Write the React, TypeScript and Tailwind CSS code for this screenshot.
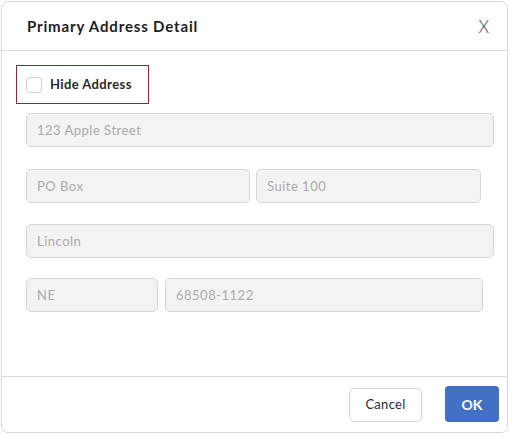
const fieldClass =
  "h-[34px] rounded-[5px] border border-[#d6d6d6] bg-[#f3f3f3] px-[10px] text-[13px] tracking-[0.5px] text-[#555] placeholder:text-[#ababab] outline-none";

const Field = ({ placeholder, width }: { placeholder: string; width: string }) => (
  <input disabled className={`${fieldClass} ${width}`} placeholder={placeholder} />
);

export default function App() {
  return (
    <div className="w-[510px] h-[435px] bg-white p-px font-['Lato',sans-serif]">
      <div className="w-[507px] h-[432px] rounded-[7px] border border-[#d9d9d9] bg-white flex flex-col">
        {/* Header */}
        <div className="h-[49px] border-b border-[#dcdcdc] flex items-center justify-between pl-[25px] pr-[18px] shrink-0">
          <h2 className="text-[15px] font-bold text-[#1e1e1e] tracking-[0.85px]">Primary Address Detail</h2>
          <button className="text-[17px] font-light text-[#3a3a3a] leading-none">X</button>
        </div>

        {/* Body */}
        <div className="flex-1 pl-[24px] pt-[14px]">
          <div className="-ml-[10px] w-[133px] h-[39px] border border-[#8a2a38] flex items-center pl-[9px] gap-[8px]">
            <span className="w-[16px] h-[16px] rounded-[4px] border border-[#cfcfcf] bg-white" />
            <span className="text-[13px] font-bold text-[#2a2a2a] tracking-[0.4px]">Hide Address</span>
          </div>

          <div className="mt-[9px] flex">
            <Field placeholder="123 Apple Street" width="w-[468px]" />
          </div>
          <div className="mt-[22px] flex gap-[6px]">
            <Field placeholder="PO Box" width="w-[224px]" />
            <Field placeholder="Suite 100" width="w-[225px]" />
          </div>
          <div className="mt-[21px] flex">
            <Field placeholder="Lincoln" width="w-[468px]" />
          </div>
          <div className="mt-[20px] flex gap-[7px]">
            <Field placeholder="NE" width="w-[132px]" />
            <Field placeholder="68508-1122" width="w-[318px]" />
          </div>
        </div>

        {/* Footer */}
        <div className="h-[56px] border-t border-[#dcdcdc] flex items-start justify-end gap-[23px] pr-[8px] pt-[9px] shrink-0">
          <button className="mt-[2px] w-[73px] h-[34px] rounded-[5px] border border-[#d4d4d4] bg-white text-[13px] text-[#2a2a2a] tracking-[0.3px]">
            Cancel
          </button>
          <button className="w-[54px] h-[36px] rounded-[4px] bg-[#4170c4] text-[14px] font-bold text-white">
            OK
          </button>
        </div>
      </div>
    </div>
  );
}
